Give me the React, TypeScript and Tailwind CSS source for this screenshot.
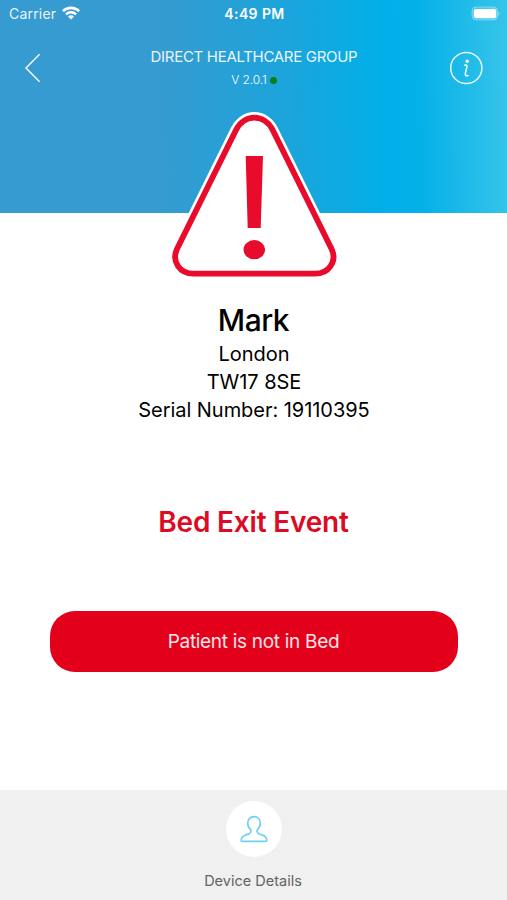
import type { ReactNode } from "react";

type Patient = {
  name: string;
  city: string;
  postcode: string;
  serial: string;
};

const patient: Patient = {
  name: "Mark",
  city: "London",
  postcode: "TW17 8SE",
  serial: "19110395",
};

function WifiIcon() {
  return (
    <svg width="18" height="14" viewBox="0 0 18 14" fill="none" stroke="white" className="-mt-0.5">
      <path d="M.9 5.2a11.5 11.5 0 0 1 16.2 0" strokeWidth="2.6" />
      <path d="M3.9 8.3a7.3 7.3 0 0 1 10.2 0" strokeWidth="2.4" />
      <path d="M9 13.6 6 10.6a4.25 4.25 0 0 1 6 0Z" fill="white" stroke="none" />
    </svg>
  );
}

function BatteryIcon() {
  return (
    <svg width="29" height="15" viewBox="0 0 29 15" className="-mt-px">
      <rect x="1" y="1" width="25.5" height="13" rx="4" fill="white" fillOpacity="0.15" stroke="white" strokeOpacity="0.35" />
      <rect x="2.8" y="3" width="22.4" height="9.2" rx="2" fill="white" />
      <path d="M27.5 5.5v4c1.2-.6 1.2-3.4 0-4Z" fill="white" fillOpacity="0.5" />
    </svg>
  );
}

function BackIcon() {
  return (
    <svg width="16" height="30" viewBox="0 0 16 30" fill="none" stroke="white" strokeWidth="1.4">
      <path d="M14.6 1.3 1 15 14.6 28.7" />
    </svg>
  );
}

function InfoIcon() {
  return (
    <svg width="34" height="34" viewBox="0 0 34 34" fill="none" stroke="white">
      <circle cx="17.3" cy="17" r="15.6" strokeWidth="1.5" strokeOpacity="0.9" />
      <circle cx="18.2" cy="10.3" r="1.7" fill="white" stroke="none" />
      <path
        d="M15.2 14.4C16.6 13.8 18.2 13.6 18 15.4C17.8 17.6 16.3 20.6 16.3 23.2C16.3 25.3 17.9 25.2 19.5 24.1"
        strokeWidth="1.5"
      />
    </svg>
  );
}

function WarningSign() {
  const triangle =
    "M76 30C80 22 87 17.6 94.3 17.6C101.6 17.6 108.7 22 112.7 30L171.6 149C177.5 161.5 168.5 173.7 155 173.7H33.5C20 173.7 11.2 161.5 17 149Z";

  return (
    <svg width="190" height="190" viewBox="0 0 190 190">
      <path d={triangle} fill="white" stroke="white" strokeWidth="11" />
      <path d={triangle} fill="white" stroke="#e80b2b" strokeWidth="5.8" />
      <path d="M85.7 56H103L100.7 128H87.7Z" fill="#e80b2b" />
      <ellipse cx="94.3" cy="149.7" rx="10.8" ry="9.6" fill="#e80b2b" />
    </svg>
  );
}

function PersonIcon() {
  return (
    <svg width="28" height="28" viewBox="0 0 28 28" fill="none" stroke="#6fd0f4" strokeWidth="1.7">
      <path
        d="M14 1.7C10 1.7 7.7 4.5 7.7 8.3C7.7 11 8.9 13.2 10.7 14.9C11.3 16.8 10.8 18 9.3 18.7C5.5 20.3 1.3 20.5 1.2 25.2Q1.2 26.3 2.3 26.3H25.7Q26.8 26.3 26.8 25.2C26.7 20.5 22.5 20.3 18.7 18.7C17.2 18 16.7 16.8 17.3 14.9C19.1 13.2 20.3 11 20.3 8.3C20.3 4.5 18 1.7 14 1.7Z"
      />
    </svg>
  );
}

function InfoLine({ children }: { children: ReactNode }) {
  return <p className="text-[20px] leading-[28px] tracking-[-0.05px]">{children}</p>;
}

export default function App() {
  return (
    <main className="flex h-[900px] w-[507px] flex-col overflow-hidden bg-white font-['Inter',sans-serif] text-black">
      <header className="h-[213px] shrink-0 bg-[linear-gradient(89deg,#369bd0_0%,#369bd0_31%,#1aa5dc_58%,#02afe9_75%,#06b1e9_83%,#37c4e9_100%)] text-white">
        <div className="grid h-[27px] grid-cols-3 items-center pr-[7px] pl-[9px]">
          <div className="flex items-center gap-1.5">
            <span className="text-[14px] tracking-[0.2px] opacity-90">Carrier</span>
            <WifiIcon />
          </div>
          <span className="text-center text-[14px] font-semibold tracking-[0.4px]">4:49 PM</span>
          <div className="flex justify-end">
            <BatteryIcon />
          </div>
        </div>

        <div className="flex h-[82px] items-center justify-between pr-6 pl-[25px]">
          <button type="button" aria-label="Back" className="w-[34px]">
            <BackIcon />
          </button>
          <div className="text-center">
            <h1 className="text-[15px] leading-6 tracking-[-0.3px] opacity-90">DIRECT HEALTHCARE GROUP</h1>
            <p className="flex items-center justify-center gap-[3px] text-[12px] leading-[22px] font-light tracking-[-0.1px]">
              V 2.0.1
              <span className="size-[7px] rounded-full bg-[#07801c]" />
            </p>
          </div>
          <button type="button" aria-label="Information">
            <InfoIcon />
          </button>
        </div>
      </header>

      <section className="-mt-[113px] flex flex-col items-center text-center">
        <div className="ml-[3px]">
          <WarningSign />
        </div>
        <h2 className="mt-2.5 text-[30px] leading-10 font-medium tracking-[-0.5px]">{patient.name}</h2>
        <div className="ml-px">
          <InfoLine>{patient.city}</InfoLine>
          <InfoLine>{patient.postcode}</InfoLine>
          <InfoLine>Serial Number: {patient.serial}</InfoLine>
        </div>
        <h3 className="mt-[78px] text-[28px] leading-10 font-semibold tracking-[-0.2px] text-[#dc0a22]">
          Bed Exit Event
        </h3>
        <button
          type="button"
          className="mt-[69px] h-[61px] w-[408px] rounded-[25px] bg-[#e3001b] pt-0.5 text-[19px] tracking-[-0.3px] text-white/90"
        >
          Patient is not in Bed
        </button>
      </section>

      <footer className="mt-auto flex h-[110px] shrink-0 flex-col items-center bg-[#f0f0f0] pt-[11px]">
        <div className="flex size-14 items-center justify-center rounded-full bg-white">
          <PersonIcon />
        </div>
        <span className="mt-3 mr-px text-[14.5px] leading-6 text-[#636363]">Device Details</span>
      </footer>
    </main>
  );
}
